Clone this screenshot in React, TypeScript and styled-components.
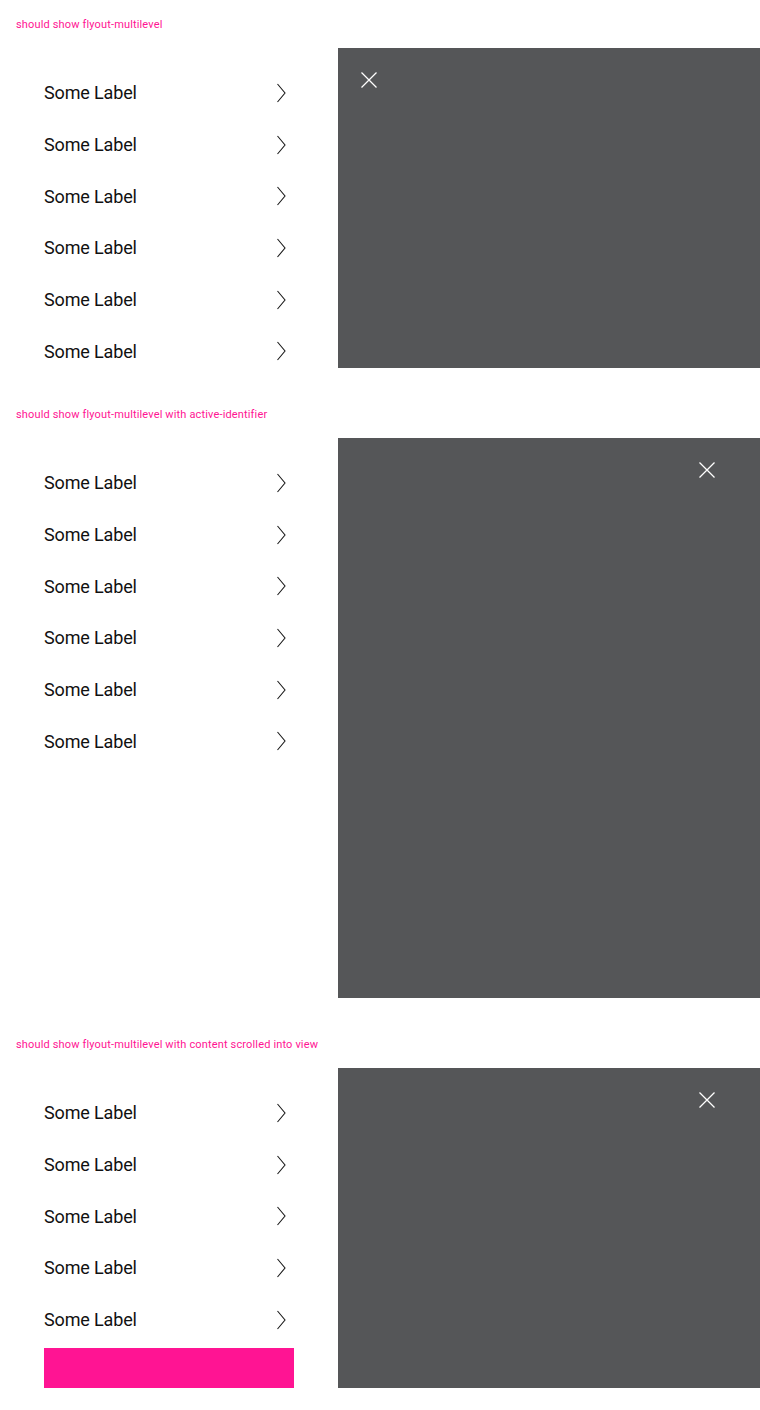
import React from "react";
import styled, { createGlobalStyle } from "styled-components";

const GlobalStyle = createGlobalStyle`
  html, body {
    margin: 0;
    padding: 0;
    background: #fff;
    font-family: Roboto, "Liberation Sans", sans-serif;
  }
`;

interface SectionProps {
  readonly title: string;
  readonly panelHeight: number;
  readonly closeRight?: boolean;
  readonly rows: number;
  readonly withBar?: boolean;
}

function Chevron() {
  return (
    <svg width="10" height="20" viewBox="0 0 10 20" fill="none">
      <path d="M1.5 1 L9 10 L1.5 19" stroke="#1a1a1a" strokeWidth="1.1" />
    </svg>
  );
}

function CloseIcon() {
  return (
    <svg width="18" height="18" viewBox="0 0 18 18" fill="none">
      <path d="M1.5 1.5 L16.5 16.5 M16.5 1.5 L1.5 16.5" stroke="#fff" strokeWidth="1.3" />
    </svg>
  );
}

function Section({ title, panelHeight, closeRight, rows, withBar }: SectionProps) {
  return (
    <Block>
      <Title>{title}</Title>
      <Content $height={panelHeight}>
        <Nav>
          {Array.from({ length: rows }).map((_, i) => (
            <Row key={i}>
              <Label>Some Label</Label>
              <Chevron />
            </Row>
          ))}
          {withBar && <ActiveBar />}
        </Nav>
        <Panel $right={closeRight}>
          <CloseButton>
            <CloseIcon />
          </CloseButton>
        </Panel>
      </Content>
    </Block>
  );
}

export default function App() {
  return (
    <Page>
      <GlobalStyle />
      <Section title="should show flyout-multilevel" panelHeight={320} rows={6} />
      <Section
        title="should show flyout-multilevel with active-identifier"
        panelHeight={560}
        rows={6}
        closeRight
      />
      <Section
        title="should show flyout-multilevel with content scrolled into view"
        panelHeight={320}
        rows={5}
        closeRight
        withBar
      />
    </Page>
  );
}

const Page = styled.div`
  width: 760px;
  display: flex;
  flex-direction: column;
  gap: 22px;
  padding-bottom: 22px;
`;

const Block = styled.section`
  display: flex;
  flex-direction: column;
`;

const Title = styled.div`
  color: #ff1493;
  font-size: 11px;
  line-height: 16px;
  letter-spacing: 0.15px;
  padding: 17px 16px 15px;
`;

const Content = styled.div<{ $height: number }>`
  display: grid;
  grid-template-columns: 338px 422px;
  height: ${(p) => p.$height}px;
`;

const Nav = styled.div`
  overflow: hidden;
  padding: 19px 44px 0 44px;
  display: flex;
  flex-direction: column;
`;

const Row = styled.div`
  flex: 0 0 51.7px;
  display: flex;
  align-items: center;
  justify-content: space-between;
  padding-right: 8px;
`;

const Label = styled.span`
  font-size: 18px;
  color: #111;
  letter-spacing: -0.15px;
`;

const ActiveBar = styled.div`
  flex: 0 0 40px;
  margin-top: 2.5px;
  background: #ff1493;
`;

const Panel = styled.div<{ $right?: boolean }>`
  background: #555658;
  display: flex;
  justify-content: ${(p) => (p.$right ? "flex-end" : "flex-start")};
  align-items: flex-start;
  padding: 23px ${(p) => (p.$right ? "44px" : "0")} 0 ${(p) => (p.$right ? "0" : "22px")};
`;

const CloseButton = styled.div`
  width: 18px;
  height: 18px;
  display: flex;
`;
